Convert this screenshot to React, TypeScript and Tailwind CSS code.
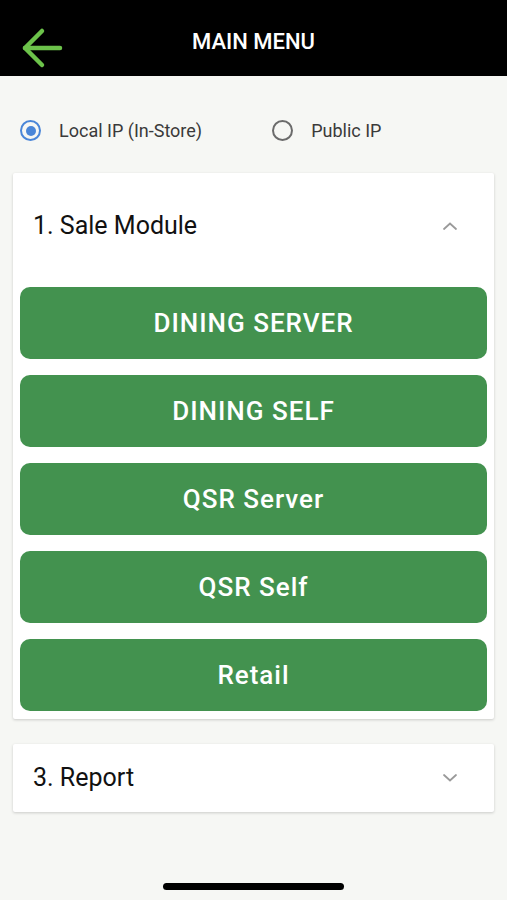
import { useState } from 'react';

const modules = ['DINING SERVER', 'DINING SELF', 'QSR Server', 'QSR Self', 'Retail'];

function Radio({ checked, label, onClick }: { checked: boolean; label: string; onClick: () => void }) {
    return (
        <button onClick={onClick} className="flex items-center gap-[18px]">
            <span
                className={`w-[21px] h-[21px] rounded-full border-[2.5px] flex items-center justify-center ${checked ? 'border-[#4a86d8]' : 'border-[#6b6b6b]'}`}
            >
                {checked && <span className="w-[10px] h-[10px] rounded-full bg-[#4a86d8]" />}
            </span>
            <span className="text-[18px] text-[#3a3a3a]">{label}</span>
        </button>
    );
}

function Chevron({ up }: { up: boolean }) {
    return (
        <svg width="16" height="10" viewBox="0 0 16 10" fill="none" stroke="#9a9a9a" strokeWidth="1.8" strokeLinecap="round">
            {up ? <path d="M2 8 L8 2.5 L14 8" /> : <path d="M2 2 L8 7.5 L14 2" />}
        </svg>
    );
}

export default function App() {
    const [local, setLocal] = useState(true);
    const [saleOpen, setSaleOpen] = useState(true);

    return (
        <div className="w-[507px] h-[900px] bg-[#f6f7f4] flex flex-col overflow-hidden" style={{ fontFamily: 'Roboto, "Noto Sans", sans-serif' }}>
            {/* Header */}
            <div className="h-[76px] bg-black flex items-center relative shrink-0">
                <button className="absolute left-[20px] top-[26px]">
                    <svg width="44" height="44" viewBox="0 0 44 44" fill="none" stroke="#6cc24a" strokeWidth="4.5" strokeLinecap="round" strokeLinejoin="round">
                        <path d="M40 22 H5" />
                        <path d="M22 5 L5 22 L22 39" />
                    </svg>
                </button>
                <h1 className="w-full text-center text-white text-[22px] font-medium pt-[6px]">MAIN MENU</h1>
            </div>

            {/* IP select */}
            <div className="flex items-center pl-[20px] pt-[41px] pb-[29px] gap-[70px]">
                <Radio checked={local} label="Local IP (In-Store)" onClick={() => setLocal(true)} />
                <Radio checked={!local} label="Public IP" onClick={() => setLocal(false)} />
            </div>

            {/* Sale module */}
            <div className="mx-[13px] bg-white shadow-[0_1px_3px_rgba(0,0,0,0.18)] rounded-[2px]">
                <button onClick={() => setSaleOpen(!saleOpen)} className="w-full h-[106px] flex items-center justify-between pl-[20px] pr-[36px]">
                    <span className="text-[25px] text-[#111]">1. Sale Module</span>
                    <Chevron up={saleOpen} />
                </button>
                {saleOpen && (
                    <div className="flex flex-col gap-[16px] px-[7px] pt-[8px] pb-[8px]">
                        {modules.map(m => (
                            <button key={m} className="h-[72px] rounded-[10px] bg-[#43924f] text-white text-[26px] font-medium tracking-[1px]">
                                {m}
                            </button>
                        ))}
                    </div>
                )}
            </div>

            {/* Report */}
            <div className="mx-[13px] mt-[25px] bg-white shadow-[0_1px_3px_rgba(0,0,0,0.18)] rounded-[2px]">
                <button className="w-full h-[68px] flex items-center justify-between pl-[20px] pr-[36px]">
                    <span className="text-[25px] text-[#111]">3. Report</span>
                    <Chevron up={false} />
                </button>
            </div>

            <div className="flex-1" />
            <div className="flex justify-center pb-[10px]">
                <div className="w-[181px] h-[7px] rounded-full bg-black" />
            </div>
        </div>
    );
}
